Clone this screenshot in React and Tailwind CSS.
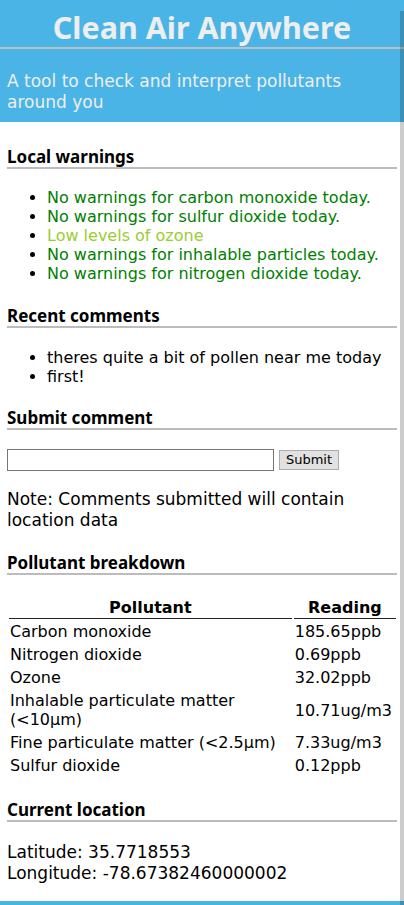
import React from 'react'

const warnings = [
  { text: 'No warnings for carbon monoxide today.', color: 'text-[#008000]' },
  { text: 'No warnings for sulfur dioxide today.', color: 'text-[#008000]' },
  { text: 'Low levels of ozone', color: 'text-[#9acd32]' },
  { text: 'No warnings for inhalable particles today.', color: 'text-[#008000]' },
  { text: 'No warnings for nitrogen dioxide today.', color: 'text-[#008000]' },
]

const comments = ['theres quite a bit of pollen near me today', 'first!']

const readings = [
  ['Carbon monoxide', '185.65ppb'],
  ['Nitrogen dioxide', '0.69ppb'],
  ['Ozone', '32.02ppb'],
  ['Inhalable particulate matter (<10µm)', '10.71ug/m3'],
  ['Fine particulate matter (<2.5µm)', '7.33ug/m3'],
  ['Sulfur dioxide', '0.12ppb'],
]

function Heading({children,className}){
  return <h2 className={"mx-[7px] border-b-2 border-[#bcbcbc] font-['Noto_Sans',sans-serif] text-[17px] font-bold leading-[21px] text-black "+(className||'')}>{children}</h2>
}

export default function App(){
  return (
    <div className="relative min-h-[905px] bg-white font-['DejaVu_Sans',Verdana,sans-serif] text-[16px] text-black">
      <header className="h-[122px] bg-[#4ab4e6] text-[#eeeeee]">
        <h1 className="h-[49px] border-b-2 border-[#c0c0c0] text-center font-['Noto_Sans',sans-serif] text-[30.5px] font-bold leading-[55px]">Clean Air Anywhere</h1>
        <p className="px-[7px] pt-[22px] text-[17px] leading-[21px]">A tool to check and interpret pollutants around you</p>
      </header>

      <Heading className="mt-[24px]">Local warnings</Heading>
      <ul className="mt-[19px] list-disc pl-[47px] leading-[19px]">
        {warnings.map(w => <li key={w.text}><span className={w.color}>{w.text}</span></li>)}
      </ul>

      <Heading className="mt-[22px]">Recent comments</Heading>
      <ul className="mt-[20px] list-disc pl-[47px] leading-[19px]">
        {comments.map(c => <li key={c}>{c}</li>)}
      </ul>

      <Heading className="mt-[21px]">Submit comment</Heading>
      <div className="mx-[7px] mt-[19px] flex items-center gap-[5px]">
        <input type="text" className="h-[22px] w-[267px] border border-[#767676] bg-white px-1 outline-none" />
        <button className="h-[20px] w-[60px] border border-[#adadad] bg-[#e1e1e1] text-[13px] leading-[18px] text-black">Submit</button>
      </div>
      <p className="mx-[7px] mt-[18px] text-[17px] leading-[21px]">Note: Comments submitted will contain location data</p>

      <Heading className="mt-[21px]">Pollutant breakdown</Heading>
      <table className="ml-[7px] mt-[20px] w-[391px] table-fixed border-separate border-spacing-[2px] leading-[19px]">
        <thead>
          <tr>
            <th className="w-[282px] border-b border-[#222] p-[1px] text-center font-bold">Pollutant</th>
            <th className="w-[102px] border-b border-[#222] p-[1px] text-center font-bold">Reading</th>
          </tr>
        </thead>
        <tbody>
          {readings.map(r => (
            <tr key={r[0]}>
              <td className="p-[1px] align-middle">{r[0]}</td>
              <td className="p-[1px] align-middle">{r[1]}</td>
            </tr>
          ))}
        </tbody>
      </table>

      <Heading className="mt-[21px]">Current location</Heading>
      <div className="mx-[7px] mt-[20px] text-[17px] leading-[21px]">
        <div>Latitude: 35.7718553</div>
        <div>Longitude: -78.67382460000002</div>
      </div>

      <footer className="mt-[17px] h-[5px] bg-[#4ab4e6]"></footer>

      <div className="absolute bottom-0 right-0 top-[11px] w-[4px] bg-black/20"></div>
    </div>
  )
}
